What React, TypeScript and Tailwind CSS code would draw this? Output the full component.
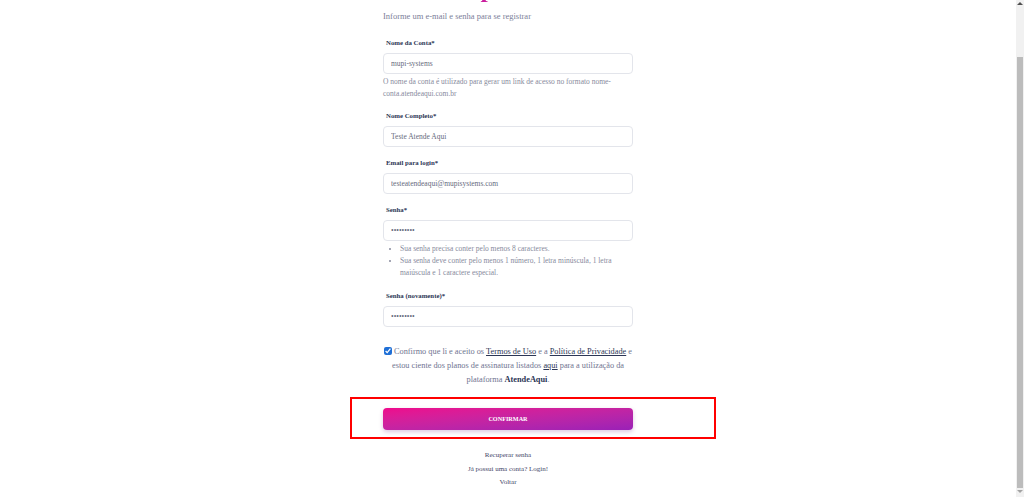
import React from 'react';

const serif = "font-['Liberation_Serif','Times_New_Roman',serif]";

const Field = ({ label, value, type = 'text', className = '' }: { label: string; value: string; type?: string; className?: string }) => (
    <div className={className}>
        <label className="block pl-[3px] text-[6.8px] leading-[10px] font-bold text-[#2c3655]">{label}</label>
        <input
            readOnly
            type={type}
            defaultValue={value}
            className={`mt-[5px] block w-full h-[21px] rounded-[4px] border border-[#e3e5eb] bg-white px-[7px] text-[7.5px] text-[#666a7d] outline-none ${serif}`}
        />
    </div>
);

const Scrollbar = () => (
    <div className="w-[8px] h-full bg-[#f1f1f1] flex flex-col items-center">
        <div className="mt-[2px] w-0 h-0 border-l-[3px] border-r-[3px] border-b-[3px] border-l-transparent border-r-transparent border-b-[#505050]"></div>
        <div className="mt-[52px] w-[6px] h-[431px] bg-[#bcbcbc]"></div>
        <div className="mt-[2px] w-0 h-0 border-l-[3px] border-r-[3px] border-t-[3px] border-l-transparent border-r-transparent border-t-[#a3a3a3]"></div>
    </div>
);

export default function App() {
    return (
        <div className={`relative flex h-[497px] w-full overflow-hidden bg-white ${serif}`}>
            <div className="flex-1 h-full overflow-hidden">
                <div className="mx-auto w-[250px] -mt-[26px]">
                    <h1 className="text-[26px] leading-[30px] font-bold bg-gradient-to-r from-[#ec008c] to-[#9c1fb5] bg-clip-text text-transparent">
                        Nova empresa
                    </h1>
                    <p className="mt-[5px] text-[8.5px] leading-[14px] text-[#7c8099]">Informe um e-mail e senha para se registrar</p>

                    <Field className="mt-[15px]" label="Nome da Conta*" value="mupi-systems" />
                    <p className="mt-[2px] text-[7.5px] leading-[12px] text-[#878a9c]">
                        O nome da conta é utilizado para gerar um link de acesso no formato nome-conta.atendeaqui.com.br
                    </p>

                    <Field className="mt-[11px]" label="Nome Completo*" value="Teste Atende Aqui" />
                    <Field className="mt-[11px]" label="Email para login*" value="testeatendeaqui@mupisystems.com" />
                    <Field className="mt-[11px]" label="Senha*" value="123456789" type="password" />
                    <ul className="mt-[2px] list-disc pl-[17px] text-[7.5px] leading-[12px] text-[#878a9c]">
                        <li>Sua senha precisa conter pelo menos 8 caracteres.</li>
                        <li>Sua senha deve conter pelo menos 1 número, 1 letra minúscula, 1 letra maiúscula e 1 caractere especial.</li>
                    </ul>
                    <Field className="mt-[12px]" label="Senha (novamente)*" value="123456789" type="password" />

                    <p className="mt-[18px] text-center text-[8.3px] leading-[14px] text-[#6f7490]">
                        <input type="checkbox" readOnly checked className="mr-[2px] h-[8px] w-[8px] align-[-1px] accent-[#1f6fd6]" />
                        Confirmo que li e aceito os <span className="underline text-[#2c3655]">Termos de Uso</span> e a{' '}
                        <span className="underline text-[#2c3655]">Política de Privacidade</span> e estou ciente dos planos de assinatura listados{' '}
                        <span className="underline text-[#2c3655]">aqui</span> para a utilização da plataforma{' '}
                        <span className="font-bold text-[#2c3655]">AtendeAqui</span>.
                    </p>

                    <button className="mt-[21px] flex h-[22px] w-full items-center justify-center rounded-[4px] bg-gradient-to-br from-[#ef078c] to-[#9a20b7] text-[6.2px] font-bold text-white shadow-[0_2px_4px_rgba(120,40,140,0.25)]">
                        CONFIRMAR
                    </button>

                    <div className="mt-[19px] flex flex-col items-center text-[7px] leading-[13.5px] text-[#3f4668]">
                        <span>Recuperar senha</span>
                        <span>Já possui uma conta? Login!</span>
                        <span>Voltar</span>
                    </div>
                </div>
            </div>
            <Scrollbar />
            <div className="absolute left-[350px] top-[397px] h-[42px] w-[366px] border-2 border-[#ff0000]"></div>
        </div>
    );
}
